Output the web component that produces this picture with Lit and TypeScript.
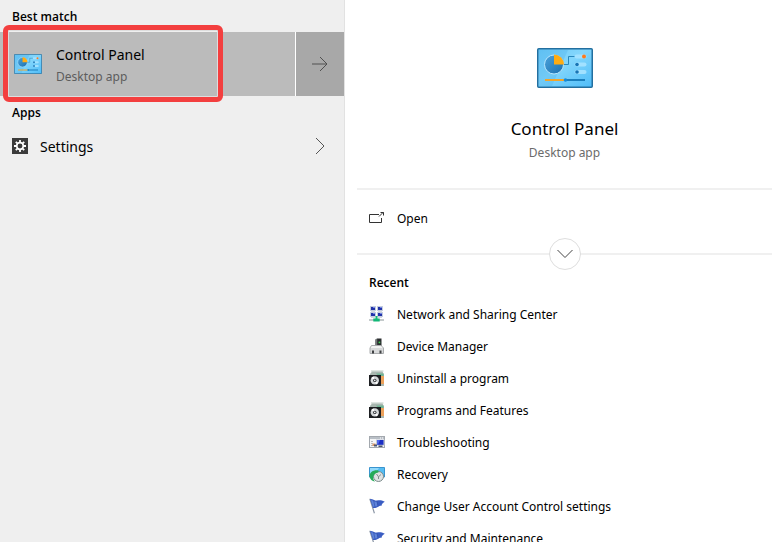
import { LitElement, html, svg, css } from "lit";
import { customElement } from "lit/decorators.js";

const flag = svg`
  <path d="M.8 .8 5.4 15.2" stroke="#8a95a5" stroke-width="1.2" fill="none"/>
  <path d="M1 1.2C4 .6 5 3.2 8 2.6S12 2 15.8 3.8C13.4 5 12.6 6.4 12.6 7.8 9.6 7.4 8.6 10.5 4 10Z" fill="#3a5dc2"/>
  <path d="M2 2.2C4 1.8 5 4.2 7.6 3.8L8.6 8C7 8.6 5.6 9 4.2 8.8Z" fill="#5f84da"/>
  <path d="M8 2.8 9 8M4.6 2.4 6 9" stroke="#3453ab" stroke-width=".7" fill="none"/>`;

const disc = svg`
  <path d="M2 0h12.5v2H2z" fill="#dfe6e2"/>
  <path d="M3 1.500h10.500l1.500 3V16H1V4z" fill="#a9b7b0"/>
  <path d="M7 3.6h7.6v5H12z" fill="#6fb593"/>
  <path d="M11 6h4v8h-4z" fill="#eda25c"/>
  <path d="M0 5h12v11H0z" fill="#1d1f22"/>
  <circle cx="5.8" cy="10.4" r="4.2" fill="#d5d8da"/>
  <path d="M5.8 10.4 2.4 8a4.2 4.2 0 0 1 2.2-1.6ZM5.8 10.4l3.4 2.4A4.2 4.2 0 0 1 7 14.4Z" fill="#fff"/>
  <circle cx="5.8" cy="10.4" r="1.7" fill="#2d3033"/>
  <circle cx="5.8" cy="10.4" r=".8" fill="#fff"/>`;

const monitor = (x: number, y: number) => svg`
  <rect x=${x} y=${y} width="6" height="5" fill="#c6cede"/>
  <rect x=${x + 1} y=${y + 1} width="4" height="3" fill="#2233a8"/>
  <rect x=${x + 3} y=${y + 1} width="2" height="1" fill="#7285e4"/>
  <rect x=${x + 1} y=${y + 5} width="4" height="1" fill="#d3d8e2"/>`;

const network = svg`
  ${monitor(1, 0)}${monitor(8, 0)}${monitor(1, 6)}${monitor(8, 6)}
  <path d="M0 13h15v2H0z" fill="#c4cacb"/>
  <path d="M6.5 10h2v2.6h2.2v3H4.3v-3h2.2z" fill="#12b877"/>`;

const device = svg`
  <path d="M6.5 1.5 8.2 .5h4.3v8h-6z" fill="#2a2d2f"/>
  <path d="M6.5 1.5 8.2 .5v8H6.5z" fill="#77797b"/>
  <rect x="9.6" y="3.6" width="1.6" height="1.6" fill="#44d655"/>
  <path d="M2.5 7.5h9.5l2.5 2.5v5.5H1V10z" fill="#d9dadb" stroke="#aaacae"/>
  <path d="M3 8h9l1.600 2H1.600z" fill="#f3f3f3"/>
  <path d="M3 12.5h2v3H3zM10.5 12.5h2v3h-2z" fill="#3e4042"/>`;

const trouble = svg`
  <rect x=".5" y="2.5" width="15" height="11" fill="#f5f6f7" stroke="#a3a8ae"/>
  <path d="M1 3h14v2H1z" fill="#b9bfc6"/>
  <path d="M11 3.5h1v1h-1zM13 3.5h1v1h-1z" fill="#fff"/>
  <path d="M2 7h2v1H2zM2 9h2v1H2zM2 11h2v1H2z" fill="#b4b9c1"/>
  <path d="M3.5 9.5h3v2.5h-3z" fill="#dc9a6b"/>
  <path d="M7 5.5h8.5v6H7z" fill="#c3c9d6"/>
  <path d="M8 6h6.5v4.8H8z" fill="#1b2fc4"/>
  <path d="M8 6h3L9 10.8H8z" fill="#4d65ea"/>
  <path d="M5 10.5h3v2H5zM9.5 11.5h4v1.5h-4z" fill="#4a5570"/>`;

const recovery = svg`
  <path d="M.5 1.5h15v9.500H.5z" fill="#56bdf2" stroke="#3a94cf"/>
  <path d="M1 2h9L4 10.5H1z" fill="#91d9fb"/>
  <circle cx="9.5" cy="10.5" r="5" fill="#dfe3e3" stroke="#7c8b8b"/>
  <path d="M9.5 4.5C5 3.5 1 6 .5 9.5c0 3 2 5.5 5.5 6C4 13.5 3.500 11 5 9 6 7.5 7.5 6.5 9.5 6.5Z" fill="#25ab58"/>
  <path d="m7.5 8 2 2.8L12 8.5M9.5 10.8V13" stroke="#6a7878" stroke-width=".8" fill="none"/>`;

const recent = [
  { label: "Network and Sharing Center", icon: network },
  { label: "Device Manager", icon: device },
  { label: "Uninstall a program", icon: disc },
  { label: "Programs and Features", icon: disc },
  { label: "Troubleshooting", icon: trouble },
  { label: "Recovery", icon: recovery },
  { label: "Change User Account Control settings", icon: flag },
  { label: "Security and Maintenance", icon: flag },
];

const panelIcon = (id: string) => html`
  <svg class="panel-icon" viewBox="0 0 56 40" aria-hidden="true">
    <defs>
      <linearGradient id="${id}-bg" x1="0" y1="0" x2="1" y2="1">
        <stop offset="0" stop-color="#6cc9f7"/><stop offset=".45" stop-color="#83d6fc"/><stop offset="1" stop-color="#4ebcf8"/>
      </linearGradient>
      <linearGradient id="${id}-pie" x1="0" y1="0" x2="1" y2="1">
        <stop offset="0" stop-color="#4ba3dc"/><stop offset="1" stop-color="#1b70b0"/>
      </linearGradient>
    </defs>
    <rect x=".75" y=".75" width="54.5" height="38.5" rx="1" fill="url(#${id}-bg)" stroke="#236f9f" stroke-width="1.5"/>
    <path d="M2 2h29L15 38H2z" fill="#2c9be0" opacity=".2"/>
    <path d="M26 16.500h5.500v-8H38" fill="none" stroke="#2887bd"/>
    <circle cx="17" cy="16.5" r="9.5" fill="url(#${id}-pie)" stroke="#b8e7ff"/>
    <path d="M17 6.500A10 10 0 0 1 27 16.500H17Z" fill="#ffac12"/>
    <rect x="37.5" y="6.500" width="12" height="4" rx="2" fill="#a2e1ff"/>
    <rect x="37.5" y="14.500" width="12" height="4" rx="2" fill="#a2e1ff"/>
    <rect x="37.5" y="22" width="12" height="4" rx="2" fill="#a2e1ff"/>
    <circle cx="47" cy="8.5" r="2" fill="#ff7a1c"/>
    <circle cx="40" cy="16.5" r="1.8" fill="#1774b5"/>
    <circle cx="40" cy="24" r="1.8" fill="#1774b5"/>
    <path d="M8 32h20" stroke="#f2a52a" stroke-width="2"/>
    <path d="M28 32h20" stroke="#1b7fbd" stroke-width="2"/>
    <circle cx="28.5" cy="32" r="1.8" fill="#168bd8"/>
  </svg>`;

@customElement("app-root")
export class AppRoot extends LitElement {
  static styles = css`
    :host {
      display: grid;
      grid-template-columns: 345px minmax(0, 1fr);
      height: 100vh;
      overflow: hidden;
      background: #fff;
      color: #000;
      font: 12px/20px "Noto Sans", "Open Sans", sans-serif;
    }
    * { box-sizing: border-box; }
    h1, h2, p, ul { margin: 0; padding: 0; font-weight: 400; }
    button { border: 0; padding: 0; background: none; color: inherit; font: inherit; text-align: left; }
    svg { display: block; flex: none; fill: none; }
    .results { background: #efefef; border-right: 1px solid #e2e2e2; }
    .heading { height: 32px; padding-left: 12px; font: 600 12px/34px "Open Sans", "Noto Sans", sans-serif; }
    .label { padding-top: 2px; }
    .best { position: relative; display: flex; gap: 1px; height: 64px; background: #fff; }
    .match { flex: 1; display: flex; align-items: center; gap: 14px; padding-left: 14px; background: #bbb; }
    .match .panel-icon { width: 28px; height: 20px; }
    .name { display: block; font-size: 14px; line-height: 24px; }
    .kind { display: block; color: #5d5d5d; line-height: 20px; }
    .go { width: 48px; display: grid; place-items: center; background: #a8a8a8; }
    .marker {
      position: absolute; inset: -7px auto -6px 3px; width: 220px;
      border: 5px solid #f33f3f; border-radius: 6px; pointer-events: none;
      box-shadow: inset 0 0 0 1px #ddd;
    }
    .app { display: flex; align-items: center; width: 100%; height: 36px; padding: 0 16px 0 12px; gap: 12px; font-size: 14px; }
    .app .label { flex: 1; }
    .detail { padding: 0 9px 0 12px; }
    .hero { display: flex; flex-direction: column; align-items: center; height: 190px; padding-top: 48px; border-bottom: 2px solid #f0f0f0; }
    .hero .panel-icon { width: 56px; height: 40px; }
    .hero h1 { margin-top: 28px; font-size: 17px; line-height: 26px; }
    .hero p { color: #6b6b6b; line-height: 22px; }
    .actions { position: relative; height: 65px; padding-top: 12px; border-bottom: 2px solid #f0f0f0; }
    .row { display: flex; align-items: center; gap: 12px; width: 100%; height: 32px; padding-left: 12px; color: inherit; text-decoration: none; }
    .more {
      position: absolute; left: 50%; bottom: -17px; width: 32px; height: 32px; margin-left: -16px;
      display: grid; place-items: center; background: #fff; border: 1px solid #dedede; border-radius: 50%;
    }
    .detail .heading { margin-top: 11px; }
    ul { list-style: none; }
  `;

  render() {
    return html`
      <section class="results">
        <h2 class="heading">Best match</h2>
        <div class="best">
          <button class="match">
            ${panelIcon("small")}
            <span class="label"><span class="name">Control Panel</span><span class="kind">Desktop app</span></span>
          </button>
          <button class="go" aria-label="Show details">
            <svg width="18" height="16" viewBox="0 0 18 16" stroke="#505050"><path d="M1 8h15M9 1l7 7-7 7"/></svg>
          </button>
          <div class="marker"></div>
        </div>
        <h2 class="heading">Apps</h2>
        <button class="app">
          <svg width="16" height="16" viewBox="0 0 16 16">
            <path d="M0 0h16v16H0z" fill="#3b3b3b"/>
            <circle cx="8" cy="8" r="3.3" stroke="#fff" stroke-width="1.7"/>
            <path d="M8 2v2.500M8 11.500V14M2 8h2.500M11.500 8H14M3.800 3.800l1.600 1.600M10.600 10.600l1.600 1.600M12.200 3.800l-1.600 1.600M5.400 10.600l-1.600 1.600" stroke="#fff" stroke-width="1.8"/>
          </svg>
          <span class="label">Settings</span>
          <svg width="16" height="16" viewBox="0 0 16 16" stroke="#555"><path d="m4 0 8 8-8 8"/></svg>
        </button>
      </section>
      <main class="detail">
        <header class="hero">
          ${panelIcon("large")}
          <h1>Control Panel</h1>
          <p>Desktop app</p>
        </header>
        <div class="actions">
          <button class="row">
            <svg width="16" height="16" viewBox="0 0 16 16" stroke="#333"><path d="M10 4.500H.5v8h12V8M10 6.500l4.500-4.500M11.500 2.500h3v3"/></svg>
            <span class="label">Open</span>
          </button>
          <button class="more" aria-label="Show more">
            <svg width="16" height="10" viewBox="0 0 16 10" stroke="#444"><path d="m.5 1 7.5 7.5L15.500 1"/></svg>
          </button>
        </div>
        <h2 class="heading">Recent</h2>
        <ul>
          ${recent.map((item) => html`
            <li><a class="row" href="#">
              <svg width="16" height="16" viewBox="0 0 16 16" aria-hidden="true">${item.icon}</svg>
              <span class="label">${item.label}</span>
            </a></li>`)}
        </ul>
      </main>
    `;
  }
}
